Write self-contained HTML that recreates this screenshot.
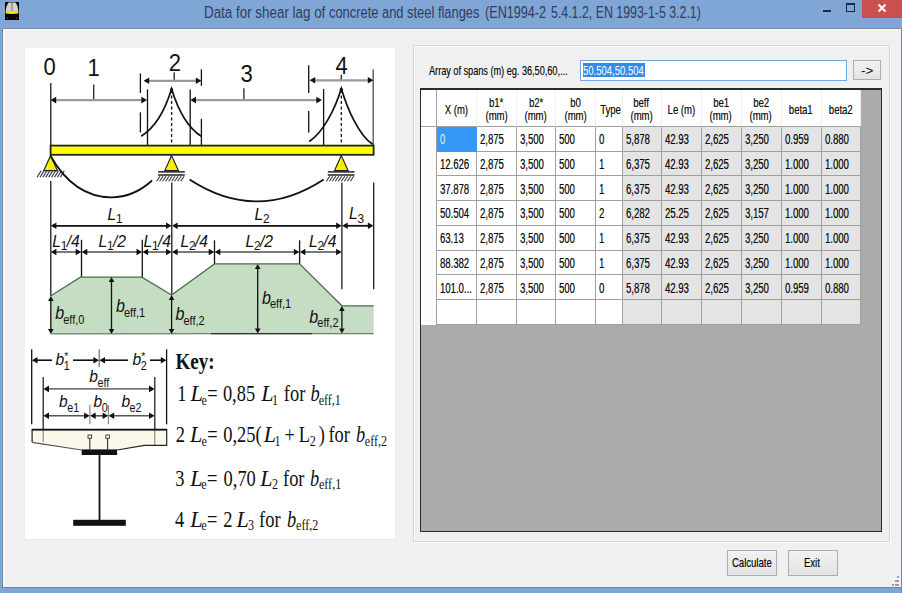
<!DOCTYPE html>
<html><head><meta charset="utf-8">
<style>
*{margin:0;padding:0;box-sizing:border-box}
html,body{width:902px;height:593px;overflow:hidden;background:#f0f0f0;font-family:"Liberation Sans",sans-serif}
.a{position:absolute}
.t{position:absolute;white-space:pre;transform-origin:0 0;line-height:1}
.cell{position:absolute;background:#fff;border-right:1px solid #a0a0a0;border-bottom:1px solid #a0a0a0;overflow:hidden}
.ro{background:#e4e4e4}
.sel{background:#3597f8;border-color:#3597f8}
.ct{position:absolute;left:3px;top:6.1px;font-size:13.8px;color:#0a0a0a;white-space:pre;transform:scaleX(.69);transform-origin:0 0;line-height:1;text-shadow:0.35px 0 0 rgba(0,0,0,.45)}
.sel .ct{color:#fff}
.rh{position:absolute;left:421px;width:16px;background:#fbfbfb;border-right:1px solid #a0a0a0}
.hd{position:absolute;background:#fff;border-right:1px solid #eeeeee;border-bottom:1px solid #a0a0a0}
.ht{position:absolute;left:0;width:100%;text-align:center;font-size:13.4px;color:#0a0a0a;white-space:pre;line-height:1;text-shadow:0.3px 0 0 rgba(0,0,0,.4)}
.ht span{display:inline-block;transform:scaleX(.71);transform-origin:50% 0}
.btn{position:absolute;border:1px solid #adadad;background:linear-gradient(#f2f2f2,#e3e3e3)}
</style></head><body>
<div class="a" style="left:0;top:0;width:902px;height:28px;background:#80a6d5"></div>
<div class="a" style="left:0;top:28px;width:902px;height:1px;background:#7189aa"></div>
<div class="a" style="left:0;top:28px;width:3px;height:565px;background:#80a6d5"></div>
<div class="a" style="left:2px;top:29px;width:1px;height:559px;background:#6f87a6"></div>
<div class="a" style="left:0;top:588px;width:902px;height:5px;background:#80a6d5"></div>
<div class="a" style="left:2px;top:587px;width:900px;height:1px;background:#6f87a6"></div>
<div class="a" style="left:901px;top:28px;width:1px;height:565px;background:#6f87a6"></div>
<div class="a" style="left:3px;top:29px;width:898px;height:1px;background:#fafbfd"></div>
<div class="a" style="left:897px;top:30px;width:4px;height:557px;background:#edf1f7"></div>
<div class="a" style="left:3px;top:30px;width:2px;height:557px;background:#f5f6f8"></div>

<svg class="a" style="left:5px;top:2.4px" width="14" height="18" viewBox="0 0 14 18">
<rect x="0" y="0" width="14" height="18" fill="#080808"/>
<path d="M3.6 0.6 L10.6 0.6 C12.2 3 13.2 6 13.3 9.8 L0.7 9.8 C0.8 6 1.8 3 3.6 0.6 Z" fill="#d6d2cc"/>
<path d="M7 0.8 L7 9.4" stroke="#5a5652" stroke-width="0.8"/>
<path d="M0.6 9.3 L13.4 9.3 L13.2 11.6 Q7 12.4 0.8 11.6 Z" fill="#eef000"/>
<path d="M2.2 15 L2.6 17 M11.8 15 L11.4 17" stroke="#444" stroke-width="0.9"/>
</svg>
<div class="t" style="left:204.1px;top:4px;font-size:17.4px;color:#2c3e5c;transform:scaleX(.770)">Data for shear lag of</div><div class="t" style="left:328.9px;top:4px;font-size:17.4px;color:#2c3e5c;transform:scaleX(.741)">concrete and steel flanges</div><div class="t" style="left:485.2px;top:4px;font-size:17.4px;color:#2c3e5c;transform:scaleX(.726)">(EN1994-2</div><div class="t" style="left:550.5px;top:4px;font-size:17.4px;color:#2c3e5c;transform:scaleX(.711)">5.4.1.2, EN 1993-1-5 3.2.1)</div>
<div class="a" style="left:823px;top:10px;width:8px;height:2px;background:#1b2a44"></div>
<div class="a" style="left:846px;top:3px;width:9px;height:9px;border:1px solid #1b2a44;border-top-width:2px"></div>
<div class="a" style="left:862px;top:0;width:40px;height:18px;background:#c9504c"></div>
<svg class="a" style="left:877px;top:3px" width="10" height="10" viewBox="0 0 10 10"><path d="M1.5 1.5 L8.5 8.5 M8.5 1.5 L1.5 8.5" stroke="#fff" stroke-width="2"/></svg>

<div class="a" style="left:24.5px;top:47.5px;width:370px;height:492.5px;background:#fff;border-bottom:1px solid #e8e8e8"></div>
<div class="a" style="left:413px;top:45px;width:477px;height:497px;border:1px solid #d6d6d6;box-shadow:inset 1px 1px 0 #fff,1px 1px 0 #fff"></div>

<div class="t" style="left:429px;top:64.3px;font-size:13.4px;color:#0a0a0a;transform:scaleX(.682);text-shadow:0.3px 0 0 rgba(0,0,0,.4)">Array of spans (m) eg. 36,50,60,...</div>
<div class="a" style="left:580px;top:59.5px;width:267px;height:21.5px;background:#fff;border:1px solid #6fa8e3"></div>
<div class="a" style="left:583px;top:63px;width:62px;height:13.5px;background:#338de8"></div>
<div class="t" style="left:583px;top:63.6px;font-size:13.6px;color:#fff;transform:scaleX(.70)">50.504,50.504</div>
<div class="btn" style="left:853px;top:60px;width:28px;height:20px"></div>
<div class="t" style="left:860.5px;top:65px;font-size:12.8px;color:#111;transform:scaleX(1.05)">-&gt;</div>

<div class="a" style="left:420px;top:88px;width:461.5px;height:443.8px;background:#ababab;border:1px solid #2a2a2a;border-top-width:2px;border-left-width:1.5px"></div>
<div class="hd" style="left:421px;top:90px;width:16px;height:37.00px;border-right-color:#a0a0a0"></div>
<div class="hd" style="left:437.00px;top:90px;width:40.00px;height:37.00px"><div class="ht" style="top:12.6px"><span>X (m)</span></div></div>
<div class="hd" style="left:477.00px;top:90px;width:39.50px;height:37.00px"><div class="ht" style="top:5.6px"><span>b1*</span></div><div class="ht" style="top:19.3px"><span>(mm)</span></div></div>
<div class="hd" style="left:516.50px;top:90px;width:39.50px;height:37.00px"><div class="ht" style="top:5.6px"><span>b2*</span></div><div class="ht" style="top:19.3px"><span>(mm)</span></div></div>
<div class="hd" style="left:556.00px;top:90px;width:40.00px;height:37.00px"><div class="ht" style="top:5.6px"><span>b0</span></div><div class="ht" style="top:19.3px"><span>(mm)</span></div></div>
<div class="hd" style="left:596.00px;top:90px;width:26.50px;height:37.00px"><div class="ht" style="top:12.6px"><span>Type</span></div></div>
<div class="hd" style="left:622.50px;top:90px;width:39.00px;height:37.00px"><div class="ht" style="top:5.6px"><span>beff</span></div><div class="ht" style="top:19.3px"><span>(mm)</span></div></div>
<div class="hd" style="left:661.50px;top:90px;width:40.00px;height:37.00px"><div class="ht" style="top:12.6px"><span>Le (m)</span></div></div>
<div class="hd" style="left:701.50px;top:90px;width:40.00px;height:37.00px"><div class="ht" style="top:5.6px"><span>be1</span></div><div class="ht" style="top:19.3px"><span>(mm)</span></div></div>
<div class="hd" style="left:741.50px;top:90px;width:40.00px;height:37.00px"><div class="ht" style="top:5.6px"><span>be2</span></div><div class="ht" style="top:19.3px"><span>(mm)</span></div></div>
<div class="hd" style="left:781.50px;top:90px;width:40.00px;height:37.00px"><div class="ht" style="top:12.6px"><span>beta1</span></div></div>
<div class="hd" style="left:821.50px;top:90px;width:39.50px;height:37.00px"><div class="ht" style="top:12.6px"><span>beta2</span></div></div>
<div class="rh" style="top:127.00px;height:24.74px"></div>
<div class="cell sel" style="left:437.00px;top:127.00px;width:40.00px;height:24.74px"><div class="ct">0</div></div>
<div class="cell" style="left:477.00px;top:127.00px;width:39.50px;height:24.74px"><div class="ct">2,875</div></div>
<div class="cell" style="left:516.50px;top:127.00px;width:39.50px;height:24.74px"><div class="ct">3,500</div></div>
<div class="cell" style="left:556.00px;top:127.00px;width:40.00px;height:24.74px"><div class="ct">500</div></div>
<div class="cell" style="left:596.00px;top:127.00px;width:26.50px;height:24.74px"><div class="ct">0</div></div>
<div class="cell ro" style="left:622.50px;top:127.00px;width:39.00px;height:24.74px"><div class="ct">5,878</div></div>
<div class="cell ro" style="left:661.50px;top:127.00px;width:40.00px;height:24.74px"><div class="ct">42.93</div></div>
<div class="cell ro" style="left:701.50px;top:127.00px;width:40.00px;height:24.74px"><div class="ct">2,625</div></div>
<div class="cell ro" style="left:741.50px;top:127.00px;width:40.00px;height:24.74px"><div class="ct">3,250</div></div>
<div class="cell ro" style="left:781.50px;top:127.00px;width:40.00px;height:24.74px"><div class="ct">0.959</div></div>
<div class="cell ro" style="left:821.50px;top:127.00px;width:39.50px;height:24.74px"><div class="ct">0.880</div></div>
<div class="rh" style="top:151.74px;height:24.74px"></div>
<div class="cell" style="left:437.00px;top:151.74px;width:40.00px;height:24.74px"><div class="ct">12.626</div></div>
<div class="cell" style="left:477.00px;top:151.74px;width:39.50px;height:24.74px"><div class="ct">2,875</div></div>
<div class="cell" style="left:516.50px;top:151.74px;width:39.50px;height:24.74px"><div class="ct">3,500</div></div>
<div class="cell" style="left:556.00px;top:151.74px;width:40.00px;height:24.74px"><div class="ct">500</div></div>
<div class="cell" style="left:596.00px;top:151.74px;width:26.50px;height:24.74px"><div class="ct">1</div></div>
<div class="cell ro" style="left:622.50px;top:151.74px;width:39.00px;height:24.74px"><div class="ct">6,375</div></div>
<div class="cell ro" style="left:661.50px;top:151.74px;width:40.00px;height:24.74px"><div class="ct">42.93</div></div>
<div class="cell ro" style="left:701.50px;top:151.74px;width:40.00px;height:24.74px"><div class="ct">2,625</div></div>
<div class="cell ro" style="left:741.50px;top:151.74px;width:40.00px;height:24.74px"><div class="ct">3,250</div></div>
<div class="cell ro" style="left:781.50px;top:151.74px;width:40.00px;height:24.74px"><div class="ct">1.000</div></div>
<div class="cell ro" style="left:821.50px;top:151.74px;width:39.50px;height:24.74px"><div class="ct">1.000</div></div>
<div class="rh" style="top:176.48px;height:24.74px"></div>
<div class="cell" style="left:437.00px;top:176.48px;width:40.00px;height:24.74px"><div class="ct">37.878</div></div>
<div class="cell" style="left:477.00px;top:176.48px;width:39.50px;height:24.74px"><div class="ct">2,875</div></div>
<div class="cell" style="left:516.50px;top:176.48px;width:39.50px;height:24.74px"><div class="ct">3,500</div></div>
<div class="cell" style="left:556.00px;top:176.48px;width:40.00px;height:24.74px"><div class="ct">500</div></div>
<div class="cell" style="left:596.00px;top:176.48px;width:26.50px;height:24.74px"><div class="ct">1</div></div>
<div class="cell ro" style="left:622.50px;top:176.48px;width:39.00px;height:24.74px"><div class="ct">6,375</div></div>
<div class="cell ro" style="left:661.50px;top:176.48px;width:40.00px;height:24.74px"><div class="ct">42.93</div></div>
<div class="cell ro" style="left:701.50px;top:176.48px;width:40.00px;height:24.74px"><div class="ct">2,625</div></div>
<div class="cell ro" style="left:741.50px;top:176.48px;width:40.00px;height:24.74px"><div class="ct">3,250</div></div>
<div class="cell ro" style="left:781.50px;top:176.48px;width:40.00px;height:24.74px"><div class="ct">1.000</div></div>
<div class="cell ro" style="left:821.50px;top:176.48px;width:39.50px;height:24.74px"><div class="ct">1.000</div></div>
<div class="rh" style="top:201.22px;height:24.74px"></div>
<div class="cell" style="left:437.00px;top:201.22px;width:40.00px;height:24.74px"><div class="ct">50.504</div></div>
<div class="cell" style="left:477.00px;top:201.22px;width:39.50px;height:24.74px"><div class="ct">2,875</div></div>
<div class="cell" style="left:516.50px;top:201.22px;width:39.50px;height:24.74px"><div class="ct">3,500</div></div>
<div class="cell" style="left:556.00px;top:201.22px;width:40.00px;height:24.74px"><div class="ct">500</div></div>
<div class="cell" style="left:596.00px;top:201.22px;width:26.50px;height:24.74px"><div class="ct">2</div></div>
<div class="cell ro" style="left:622.50px;top:201.22px;width:39.00px;height:24.74px"><div class="ct">6,282</div></div>
<div class="cell ro" style="left:661.50px;top:201.22px;width:40.00px;height:24.74px"><div class="ct">25.25</div></div>
<div class="cell ro" style="left:701.50px;top:201.22px;width:40.00px;height:24.74px"><div class="ct">2,625</div></div>
<div class="cell ro" style="left:741.50px;top:201.22px;width:40.00px;height:24.74px"><div class="ct">3,157</div></div>
<div class="cell ro" style="left:781.50px;top:201.22px;width:40.00px;height:24.74px"><div class="ct">1.000</div></div>
<div class="cell ro" style="left:821.50px;top:201.22px;width:39.50px;height:24.74px"><div class="ct">1.000</div></div>
<div class="rh" style="top:225.96px;height:24.74px"></div>
<div class="cell" style="left:437.00px;top:225.96px;width:40.00px;height:24.74px"><div class="ct">63.13</div></div>
<div class="cell" style="left:477.00px;top:225.96px;width:39.50px;height:24.74px"><div class="ct">2,875</div></div>
<div class="cell" style="left:516.50px;top:225.96px;width:39.50px;height:24.74px"><div class="ct">3,500</div></div>
<div class="cell" style="left:556.00px;top:225.96px;width:40.00px;height:24.74px"><div class="ct">500</div></div>
<div class="cell" style="left:596.00px;top:225.96px;width:26.50px;height:24.74px"><div class="ct">1</div></div>
<div class="cell ro" style="left:622.50px;top:225.96px;width:39.00px;height:24.74px"><div class="ct">6,375</div></div>
<div class="cell ro" style="left:661.50px;top:225.96px;width:40.00px;height:24.74px"><div class="ct">42.93</div></div>
<div class="cell ro" style="left:701.50px;top:225.96px;width:40.00px;height:24.74px"><div class="ct">2,625</div></div>
<div class="cell ro" style="left:741.50px;top:225.96px;width:40.00px;height:24.74px"><div class="ct">3,250</div></div>
<div class="cell ro" style="left:781.50px;top:225.96px;width:40.00px;height:24.74px"><div class="ct">1.000</div></div>
<div class="cell ro" style="left:821.50px;top:225.96px;width:39.50px;height:24.74px"><div class="ct">1.000</div></div>
<div class="rh" style="top:250.70px;height:24.74px"></div>
<div class="cell" style="left:437.00px;top:250.70px;width:40.00px;height:24.74px"><div class="ct">88.382</div></div>
<div class="cell" style="left:477.00px;top:250.70px;width:39.50px;height:24.74px"><div class="ct">2,875</div></div>
<div class="cell" style="left:516.50px;top:250.70px;width:39.50px;height:24.74px"><div class="ct">3,500</div></div>
<div class="cell" style="left:556.00px;top:250.70px;width:40.00px;height:24.74px"><div class="ct">500</div></div>
<div class="cell" style="left:596.00px;top:250.70px;width:26.50px;height:24.74px"><div class="ct">1</div></div>
<div class="cell ro" style="left:622.50px;top:250.70px;width:39.00px;height:24.74px"><div class="ct">6,375</div></div>
<div class="cell ro" style="left:661.50px;top:250.70px;width:40.00px;height:24.74px"><div class="ct">42.93</div></div>
<div class="cell ro" style="left:701.50px;top:250.70px;width:40.00px;height:24.74px"><div class="ct">2,625</div></div>
<div class="cell ro" style="left:741.50px;top:250.70px;width:40.00px;height:24.74px"><div class="ct">3,250</div></div>
<div class="cell ro" style="left:781.50px;top:250.70px;width:40.00px;height:24.74px"><div class="ct">1.000</div></div>
<div class="cell ro" style="left:821.50px;top:250.70px;width:39.50px;height:24.74px"><div class="ct">1.000</div></div>
<div class="rh" style="top:275.44px;height:24.74px"></div>
<div class="cell" style="left:437.00px;top:275.44px;width:40.00px;height:24.74px"><div class="ct">101.0...</div></div>
<div class="cell" style="left:477.00px;top:275.44px;width:39.50px;height:24.74px"><div class="ct">2,875</div></div>
<div class="cell" style="left:516.50px;top:275.44px;width:39.50px;height:24.74px"><div class="ct">3,500</div></div>
<div class="cell" style="left:556.00px;top:275.44px;width:40.00px;height:24.74px"><div class="ct">500</div></div>
<div class="cell" style="left:596.00px;top:275.44px;width:26.50px;height:24.74px"><div class="ct">0</div></div>
<div class="cell ro" style="left:622.50px;top:275.44px;width:39.00px;height:24.74px"><div class="ct">5,878</div></div>
<div class="cell ro" style="left:661.50px;top:275.44px;width:40.00px;height:24.74px"><div class="ct">42.93</div></div>
<div class="cell ro" style="left:701.50px;top:275.44px;width:40.00px;height:24.74px"><div class="ct">2,625</div></div>
<div class="cell ro" style="left:741.50px;top:275.44px;width:40.00px;height:24.74px"><div class="ct">3,250</div></div>
<div class="cell ro" style="left:781.50px;top:275.44px;width:40.00px;height:24.74px"><div class="ct">0.959</div></div>
<div class="cell ro" style="left:821.50px;top:275.44px;width:39.50px;height:24.74px"><div class="ct">0.880</div></div>
<div class="rh" style="top:300.18px;height:24.74px"></div>
<div class="cell" style="left:437.00px;top:300.18px;width:40.00px;height:24.74px"></div>
<div class="cell" style="left:477.00px;top:300.18px;width:39.50px;height:24.74px"></div>
<div class="cell" style="left:516.50px;top:300.18px;width:39.50px;height:24.74px"></div>
<div class="cell" style="left:556.00px;top:300.18px;width:40.00px;height:24.74px"></div>
<div class="cell" style="left:596.00px;top:300.18px;width:26.50px;height:24.74px"></div>
<div class="cell ro" style="left:622.50px;top:300.18px;width:39.00px;height:24.74px"></div>
<div class="cell ro" style="left:661.50px;top:300.18px;width:40.00px;height:24.74px"></div>
<div class="cell ro" style="left:701.50px;top:300.18px;width:40.00px;height:24.74px"></div>
<div class="cell ro" style="left:741.50px;top:300.18px;width:40.00px;height:24.74px"></div>
<div class="cell ro" style="left:781.50px;top:300.18px;width:40.00px;height:24.74px"></div>
<div class="cell ro" style="left:821.50px;top:300.18px;width:39.50px;height:24.74px"></div>

<div class="a" style="left:891.7px;top:583.6px;width:2px;height:2px;background:#9a9a9a"></div><div class="a" style="left:894.5px;top:583.6px;width:2px;height:2px;background:#9a9a9a"></div><div class="a" style="left:897.2px;top:583.6px;width:2px;height:2px;background:#9a9a9a"></div><div class="a" style="left:894.5px;top:579.9px;width:2px;height:2px;background:#9a9a9a"></div><div class="a" style="left:897.2px;top:579.9px;width:2px;height:2px;background:#9a9a9a"></div><div class="a" style="left:897.2px;top:576.3px;width:2px;height:2px;background:#9a9a9a"></div>
<div class="btn" style="left:727px;top:550px;width:50px;height:26px"></div>
<div class="t" style="left:731.5px;top:556.3px;font-size:13.6px;color:#0a0a0a;transform:scaleX(.70);text-shadow:0.3px 0 0 rgba(0,0,0,.4)">Calculate</div>
<div class="btn" style="left:788px;top:550px;width:50px;height:26px"></div>
<div class="t" style="left:804px;top:556.3px;font-size:13.6px;color:#0a0a0a;transform:scaleX(.70);text-shadow:0.3px 0 0 rgba(0,0,0,.4)">Exit</div>

<svg class="a" style="left:0;top:0" width="902" height="593" viewBox="0 0 902 593">
<text transform="translate(43.5 75.3) scale(0.9 1)" style="font-family:Liberation Sans;font-size:24.5px;" fill="#111">0</text>
<text transform="translate(87.6 75.6) scale(0.9 1)" style="font-family:Liberation Sans;font-size:24.5px;" fill="#111">1</text>
<text transform="translate(168.8 71.3) scale(0.9 1)" style="font-family:Liberation Sans;font-size:24.5px;" fill="#111">2</text>
<text transform="translate(240.5 82.3) scale(0.9 1)" style="font-family:Liberation Sans;font-size:24.5px;" fill="#111">3</text>
<text transform="translate(335.6 74.3) scale(0.9 1)" style="font-family:Liberation Sans;font-size:24.5px;" fill="#111">4</text>
<line x1="93.7" y1="84.4" x2="93.7" y2="100.5" stroke="#333" stroke-width="1.4" />
<line x1="174.2" y1="72.3" x2="174.2" y2="80.8" stroke="#333" stroke-width="1.4" />
<line x1="243.9" y1="88.3" x2="243.9" y2="100.5" stroke="#333" stroke-width="1.4" />
<line x1="341.3" y1="74.8" x2="341.3" y2="80.5" stroke="#333" stroke-width="1.4" />
<line x1="50.8" y1="83" x2="50.8" y2="146" stroke="#111" stroke-width="1.25" />
<line x1="50.8" y1="181" x2="50.8" y2="296" stroke="#111" stroke-width="1.25" />
<line x1="140.4" y1="73.5" x2="140.4" y2="93" stroke="#111" stroke-width="1.3" />
<line x1="140.4" y1="112.3" x2="140.4" y2="132.4" stroke="#111" stroke-width="1.3" />
<line x1="147.5" y1="89.4" x2="147.5" y2="145" stroke="#111" stroke-width="1.3" />
<line x1="190.2" y1="89.4" x2="190.2" y2="145" stroke="#111" stroke-width="1.3" />
<line x1="201.4" y1="69.3" x2="201.4" y2="85.8" stroke="#111" stroke-width="1.3" />
<line x1="201.4" y1="118.8" x2="201.4" y2="145" stroke="#111" stroke-width="1.3" />
<line x1="308.7" y1="65.2" x2="308.7" y2="93" stroke="#111" stroke-width="1.3" />
<line x1="308.7" y1="110.9" x2="308.7" y2="132.6" stroke="#111" stroke-width="1.3" />
<line x1="323.6" y1="88.9" x2="323.6" y2="145" stroke="#111" stroke-width="1.3" />
<line x1="373.2" y1="69.2" x2="373.2" y2="145" stroke="#666" stroke-width="1.5" />
<line x1="171.6" y1="90" x2="171.6" y2="145" stroke="#111" stroke-width="1.3" stroke-dasharray="3 2.5"/>
<line x1="341.3" y1="90" x2="341.3" y2="145" stroke="#111" stroke-width="1.3" stroke-dasharray="3 2.5"/>
<line x1="53.96" y1="100.1" x2="143.64" y2="100.1" stroke="#9a9a9a" stroke-width="2.2" />
<path d="M50.6 100.1 L56.2 96.8 L56.2 103.39999999999999 Z" fill="#111"/>
<path d="M147 100.1 L141.4 96.8 L141.4 103.39999999999999 Z" fill="#111"/>
<line x1="193.76000000000002" y1="100.1" x2="318.53999999999996" y2="100.1" stroke="#9a9a9a" stroke-width="2.2" />
<path d="M190.4 100.1 L196.0 96.8 L196.0 103.39999999999999 Z" fill="#111"/>
<path d="M321.9 100.1 L316.29999999999995 96.8 L316.29999999999995 103.39999999999999 Z" fill="#111"/>
<line x1="146.96" y1="80.8" x2="198.04" y2="80.8" stroke="#9a9a9a" stroke-width="2.2" />
<path d="M143.6 80.8 L149.2 77.5 L149.2 84.1 Z" fill="#111"/>
<path d="M201.4 80.8 L195.8 77.5 L195.8 84.1 Z" fill="#111"/>
<line x1="312.96000000000004" y1="80.3" x2="370.03999999999996" y2="80.3" stroke="#9a9a9a" stroke-width="2.2" />
<path d="M309.6 80.3 L315.20000000000005 77.0 L315.20000000000005 83.6 Z" fill="#111"/>
<path d="M373.4 80.3 L367.79999999999995 77.0 L367.79999999999995 83.6 Z" fill="#111"/>
<path d="M141.2 136.3 C155.2 127.30000000000001 165.6 108.7 171.6 88.7 C177.6 108.7 187.3 127.30000000000001 201.3 136.3" fill="none" stroke="#111" stroke-width="1.7"/>
<circle cx="171.6" cy="89.7" r="1.6" fill="#111"/>
<path d="M309.2 141.5 C323.2 132.5 335.3 108.4 341.3 88.4 C347.3 108.4 358.6 135.3 372.6 144.3" fill="none" stroke="#111" stroke-width="1.7"/>
<circle cx="341.3" cy="89.4" r="1.6" fill="#111"/>
<rect x="50.6" y="145.6" width="323" height="9.2" fill="#ffff00" stroke="#222" stroke-width="1.8"/>
<path d="M50.6 155.6 L43.800000000000004 170.6 L57.4 170.6 Z" fill="#f6ef00" stroke="#222" stroke-width="1.2"/>
<line x1="37.1" y1="177.2" x2="41.1" y2="170.8" stroke="#334" stroke-width="1.2" />
<line x1="40.0" y1="177.2" x2="44.0" y2="170.8" stroke="#334" stroke-width="1.2" />
<line x1="42.9" y1="177.2" x2="46.9" y2="170.8" stroke="#334" stroke-width="1.2" />
<line x1="45.8" y1="177.2" x2="49.8" y2="170.8" stroke="#334" stroke-width="1.2" />
<line x1="48.7" y1="177.2" x2="52.7" y2="170.8" stroke="#334" stroke-width="1.2" />
<line x1="51.6" y1="177.2" x2="55.6" y2="170.8" stroke="#334" stroke-width="1.2" />
<line x1="54.5" y1="177.2" x2="58.5" y2="170.8" stroke="#334" stroke-width="1.2" />
<line x1="57.400000000000006" y1="177.2" x2="61.400000000000006" y2="170.8" stroke="#334" stroke-width="1.2" />
<line x1="60.3" y1="177.2" x2="64.3" y2="170.8" stroke="#334" stroke-width="1.2" />
<path d="M171.6 155.6 L164.79999999999998 170.6 L178.4 170.6 Z" fill="#f6ef00" stroke="#222" stroke-width="1.2"/>
<line x1="158.1" y1="171.9" x2="184.79999999999998" y2="171.9" stroke="#111" stroke-width="1.4" />
<line x1="158.1" y1="175.0" x2="184.79999999999998" y2="175.0" stroke="#111" stroke-width="1.4" />
<line x1="156.6" y1="181.2" x2="160.1" y2="176.2" stroke="#333" stroke-width="1.1" />
<line x1="159.6" y1="181.2" x2="163.1" y2="176.2" stroke="#333" stroke-width="1.1" />
<line x1="162.6" y1="181.2" x2="166.1" y2="176.2" stroke="#333" stroke-width="1.1" />
<line x1="165.6" y1="181.2" x2="169.1" y2="176.2" stroke="#333" stroke-width="1.1" />
<line x1="168.6" y1="181.2" x2="172.1" y2="176.2" stroke="#333" stroke-width="1.1" />
<line x1="171.6" y1="181.2" x2="175.1" y2="176.2" stroke="#333" stroke-width="1.1" />
<line x1="174.6" y1="181.2" x2="178.1" y2="176.2" stroke="#333" stroke-width="1.1" />
<line x1="177.6" y1="181.2" x2="181.1" y2="176.2" stroke="#333" stroke-width="1.1" />
<line x1="180.6" y1="181.2" x2="184.1" y2="176.2" stroke="#333" stroke-width="1.1" />
<path d="M341.3 155.6 L334.5 170.6 L348.1 170.6 Z" fill="#f6ef00" stroke="#222" stroke-width="1.2"/>
<line x1="327.8" y1="171.9" x2="354.5" y2="171.9" stroke="#111" stroke-width="1.4" />
<line x1="327.8" y1="175.0" x2="354.5" y2="175.0" stroke="#111" stroke-width="1.4" />
<line x1="326.3" y1="181.2" x2="329.8" y2="176.2" stroke="#333" stroke-width="1.1" />
<line x1="329.3" y1="181.2" x2="332.8" y2="176.2" stroke="#333" stroke-width="1.1" />
<line x1="332.3" y1="181.2" x2="335.8" y2="176.2" stroke="#333" stroke-width="1.1" />
<line x1="335.3" y1="181.2" x2="338.8" y2="176.2" stroke="#333" stroke-width="1.1" />
<line x1="338.3" y1="181.2" x2="341.8" y2="176.2" stroke="#333" stroke-width="1.1" />
<line x1="341.3" y1="181.2" x2="344.8" y2="176.2" stroke="#333" stroke-width="1.1" />
<line x1="344.3" y1="181.2" x2="347.8" y2="176.2" stroke="#333" stroke-width="1.1" />
<line x1="347.3" y1="181.2" x2="350.8" y2="176.2" stroke="#333" stroke-width="1.1" />
<line x1="350.3" y1="181.2" x2="353.8" y2="176.2" stroke="#333" stroke-width="1.1" />
<path d="M50.6 156 C62 176 80 197 111 197.3 C132 197.5 146 186 152.1 180.5" fill="none" stroke="#111" stroke-width="1.8"/>
<path d="M189.6 179.6 Q256.5 223.4 323.7 179.4" fill="none" stroke="#111" stroke-width="1.8"/>
<line x1="171.8" y1="182.5" x2="171.8" y2="295" stroke="#111" stroke-width="1.25" />
<line x1="341.9" y1="182.5" x2="341.9" y2="289.3" stroke="#111" stroke-width="1.25" />
<line x1="373.7" y1="182.5" x2="373.7" y2="289.3" stroke="#111" stroke-width="1.25" />
<line x1="81.5" y1="239.8" x2="81.5" y2="277" stroke="#111" stroke-width="1.3" />
<line x1="142.3" y1="239.8" x2="142.3" y2="277" stroke="#111" stroke-width="1.3" />
<line x1="214.5" y1="240.3" x2="214.5" y2="264" stroke="#111" stroke-width="1.3" />
<line x1="299.6" y1="240.3" x2="299.6" y2="264" stroke="#111" stroke-width="1.3" />
<line x1="54.16" y1="225.8" x2="168.23999999999998" y2="225.8" stroke="#111" stroke-width="1.8" />
<path d="M50.8 225.8 L56.4 222.5 L56.4 229.10000000000002 Z" fill="#111"/>
<path d="M171.6 225.8 L166.0 222.5 L166.0 229.10000000000002 Z" fill="#111"/>
<line x1="175.36" y1="225.8" x2="338.34" y2="225.8" stroke="#111" stroke-width="1.8" />
<path d="M172.0 225.8 L177.6 222.5 L177.6 229.10000000000002 Z" fill="#111"/>
<path d="M341.7 225.8 L336.09999999999997 222.5 L336.09999999999997 229.10000000000002 Z" fill="#111"/>
<line x1="345.46000000000004" y1="225.8" x2="370.14" y2="225.8" stroke="#111" stroke-width="1.8" />
<path d="M342.1 225.8 L347.70000000000005 222.5 L347.70000000000005 229.10000000000002 Z" fill="#111"/>
<path d="M373.5 225.8 L367.9 222.5 L367.9 229.10000000000002 Z" fill="#111"/>
<line x1="54.16" y1="252" x2="77.94" y2="252" stroke="#7a7a7a" stroke-width="2" />
<path d="M50.8 252 L56.4 248.7 L56.4 255.3 Z" fill="#111"/>
<path d="M81.3 252 L75.7 248.7 L75.7 255.3 Z" fill="#111"/>
<line x1="85.06" y1="252" x2="138.73999999999998" y2="252" stroke="#7a7a7a" stroke-width="2" />
<path d="M81.7 252 L87.3 248.7 L87.3 255.3 Z" fill="#111"/>
<path d="M142.1 252 L136.5 248.7 L136.5 255.3 Z" fill="#111"/>
<line x1="145.86" y1="252" x2="168.23999999999998" y2="252" stroke="#7a7a7a" stroke-width="2" />
<path d="M142.5 252 L148.1 248.7 L148.1 255.3 Z" fill="#111"/>
<path d="M171.6 252 L166.0 248.7 L166.0 255.3 Z" fill="#111"/>
<line x1="175.36" y1="252" x2="210.94" y2="252" stroke="#7a7a7a" stroke-width="2" />
<path d="M172.0 252 L177.6 248.7 L177.6 255.3 Z" fill="#111"/>
<path d="M214.3 252 L208.70000000000002 248.7 L208.70000000000002 255.3 Z" fill="#111"/>
<line x1="218.06" y1="252" x2="296.03999999999996" y2="252" stroke="#7a7a7a" stroke-width="2" />
<path d="M214.7 252 L220.29999999999998 248.7 L220.29999999999998 255.3 Z" fill="#111"/>
<path d="M299.4 252 L293.79999999999995 248.7 L293.79999999999995 255.3 Z" fill="#111"/>
<line x1="303.16" y1="252" x2="338.34" y2="252" stroke="#7a7a7a" stroke-width="2" />
<path d="M299.8 252 L305.40000000000003 248.7 L305.40000000000003 255.3 Z" fill="#111"/>
<path d="M341.7 252 L336.09999999999997 248.7 L336.09999999999997 255.3 Z" fill="#111"/>
<text transform="translate(107.5 219.6) scale(0.95 1)" style="font-family:Liberation Sans;font-size:16.5px;font-style:italic;" fill="#111">L</text>
<text transform="translate(116.0 223.4) scale(0.95 1)" style="font-family:Liberation Sans;font-size:12.5px;" fill="#111">1</text>
<text transform="translate(254.5 219.6) scale(0.95 1)" style="font-family:Liberation Sans;font-size:16.5px;font-style:italic;" fill="#111">L</text>
<text transform="translate(263.0 223.4) scale(0.95 1)" style="font-family:Liberation Sans;font-size:12.5px;" fill="#111">2</text>
<text transform="translate(349 219.2) scale(0.95 1)" style="font-family:Liberation Sans;font-size:16.5px;font-style:italic;" fill="#111">L</text>
<text transform="translate(357.5 223.0) scale(0.95 1)" style="font-family:Liberation Sans;font-size:12.5px;" fill="#111">3</text>
<text transform="translate(52.2 246.6) scale(0.95 1)" style="font-family:Liberation Sans;font-size:16.5px;font-style:italic;" fill="#111">L</text>
<text transform="translate(60.7 250.4) scale(0.95 1)" style="font-family:Liberation Sans;font-size:12.5px;" fill="#111">1</text>
<text transform="translate(66.7 246.6) scale(0.95 1)" style="font-family:Liberation Sans;font-size:16.5px;font-style:italic;" fill="#111">/4</text>
<text transform="translate(98.5 246.6) scale(0.95 1)" style="font-family:Liberation Sans;font-size:16.5px;font-style:italic;" fill="#111">L</text>
<text transform="translate(107.0 250.4) scale(0.95 1)" style="font-family:Liberation Sans;font-size:12.5px;" fill="#111">1</text>
<text transform="translate(113.0 246.6) scale(0.95 1)" style="font-family:Liberation Sans;font-size:16.5px;font-style:italic;" fill="#111">/2</text>
<text transform="translate(143.5 246.6) scale(0.95 1)" style="font-family:Liberation Sans;font-size:16.5px;font-style:italic;" fill="#111">L</text>
<text transform="translate(152.0 250.4) scale(0.95 1)" style="font-family:Liberation Sans;font-size:12.5px;" fill="#111">1</text>
<text transform="translate(158.0 246.6) scale(0.95 1)" style="font-family:Liberation Sans;font-size:16.5px;font-style:italic;" fill="#111">/4</text>
<text transform="translate(180.5 246.6) scale(0.95 1)" style="font-family:Liberation Sans;font-size:16.5px;font-style:italic;" fill="#111">L</text>
<text transform="translate(189.0 250.4) scale(0.95 1)" style="font-family:Liberation Sans;font-size:12.5px;" fill="#111">2</text>
<text transform="translate(195.0 246.6) scale(0.95 1)" style="font-family:Liberation Sans;font-size:16.5px;font-style:italic;" fill="#111">/4</text>
<text transform="translate(245.5 246.6) scale(0.95 1)" style="font-family:Liberation Sans;font-size:16.5px;font-style:italic;" fill="#111">L</text>
<text transform="translate(254.0 250.4) scale(0.95 1)" style="font-family:Liberation Sans;font-size:12.5px;" fill="#111">2</text>
<text transform="translate(260.0 246.6) scale(0.95 1)" style="font-family:Liberation Sans;font-size:16.5px;font-style:italic;" fill="#111">/2</text>
<text transform="translate(309 246.6) scale(0.95 1)" style="font-family:Liberation Sans;font-size:16.5px;font-style:italic;" fill="#111">L</text>
<text transform="translate(317.5 250.4) scale(0.95 1)" style="font-family:Liberation Sans;font-size:12.5px;" fill="#111">2</text>
<text transform="translate(323.5 246.6) scale(0.95 1)" style="font-family:Liberation Sans;font-size:16.5px;font-style:italic;" fill="#111">/4</text>
<path d="M50.6 296 L80.4 277.1 L141.9 277.1 L171.6 295 L214.5 263.9 L299.6 263.9 L341.9 305.8 L373.7 305.8 L373.7 333.6 L50.6 334 Z" fill="#c4ddc3" stroke="none"/>
<path d="M50.6 296 L80.4 277.1 L141.9 277.1 L171.6 295 L214.5 263.9 L299.6 263.9 L341.9 305.8 L373.7 305.8" fill="none" stroke="#4d6b4d" stroke-width="1.3"/>
<line x1="50.6" y1="333.8" x2="373.7" y2="333.6" stroke="#6f7f6f" stroke-width="1.3" />
<line x1="211" y1="333.7" x2="312" y2="333.7" stroke="#333" stroke-width="1.3" />
<line x1="50.8" y1="299.0" x2="50.8" y2="331.0" stroke="#111" stroke-width="1.3" />
<path d="M50.8 296 L48.0 301 L53.599999999999994 301 Z" fill="#111"/>
<path d="M50.8 334 L48.0 329 L53.599999999999994 329 Z" fill="#111"/>
<line x1="111.5" y1="280.0" x2="111.5" y2="331.0" stroke="#111" stroke-width="1.3" />
<path d="M111.5 277 L108.7 282 L114.3 282 Z" fill="#111"/>
<path d="M111.5 334 L108.7 329 L114.3 329 Z" fill="#111"/>
<line x1="171.6" y1="298.0" x2="171.6" y2="331.0" stroke="#111" stroke-width="1.3" />
<path d="M171.6 295 L168.79999999999998 300 L174.4 300 Z" fill="#111"/>
<path d="M171.6 334 L168.79999999999998 329 L174.4 329 Z" fill="#111"/>
<line x1="257.7" y1="267.0" x2="257.7" y2="330.5" stroke="#111" stroke-width="1.3" />
<path d="M257.7 264 L254.89999999999998 269 L260.5 269 Z" fill="#111"/>
<path d="M257.7 333.5 L254.89999999999998 328.5 L260.5 328.5 Z" fill="#111"/>
<line x1="341.9" y1="309.0" x2="341.9" y2="330.5" stroke="#111" stroke-width="1.3" />
<path d="M341.9 306 L339.09999999999997 311 L344.7 311 Z" fill="#111"/>
<path d="M341.9 333.5 L339.09999999999997 328.5 L344.7 328.5 Z" fill="#111"/>
<text transform="translate(55.2 319.3) scale(0.92 1)" style="font-family:Liberation Sans;font-size:17.5px;font-style:italic;" fill="#111">b</text>
<text transform="translate(63.2 323.6) scale(0.86 1)" style="font-family:Liberation Sans;font-size:12.8px;" fill="#111">eff,0</text>
<text transform="translate(116 312.2) scale(0.92 1)" style="font-family:Liberation Sans;font-size:17.5px;font-style:italic;" fill="#111">b</text>
<text transform="translate(124 316.5) scale(0.86 1)" style="font-family:Liberation Sans;font-size:12.8px;" fill="#111">eff,1</text>
<text transform="translate(175.5 320.3) scale(0.92 1)" style="font-family:Liberation Sans;font-size:17.5px;font-style:italic;" fill="#111">b</text>
<text transform="translate(183.5 324.6) scale(0.86 1)" style="font-family:Liberation Sans;font-size:12.8px;" fill="#111">eff,2</text>
<text transform="translate(262 303.8) scale(0.92 1)" style="font-family:Liberation Sans;font-size:17.5px;font-style:italic;" fill="#111">b</text>
<text transform="translate(270 308.1) scale(0.86 1)" style="font-family:Liberation Sans;font-size:12.8px;" fill="#111">eff,1</text>
<text transform="translate(309.3 322.5) scale(0.92 1)" style="font-family:Liberation Sans;font-size:17.5px;font-style:italic;" fill="#111">b</text>
<text transform="translate(317.3 326.8) scale(0.86 1)" style="font-family:Liberation Sans;font-size:12.8px;" fill="#111">eff,2</text>
<line x1="31.7" y1="349.3" x2="31.7" y2="424.3" stroke="#111" stroke-width="1.3" />
<line x1="166.6" y1="349.3" x2="166.6" y2="424.3" stroke="#111" stroke-width="1.3" />
<line x1="99.2" y1="349.3" x2="99.2" y2="367" stroke="#777" stroke-width="1.3" />
<line x1="35" y1="360.2" x2="52" y2="360.2" stroke="#111" stroke-width="1.6" />
<path d="M31.9 360.2 L37.5 356.9 L37.5 363.5 Z" fill="#111"/>
<line x1="73" y1="360.2" x2="96" y2="360.2" stroke="#111" stroke-width="1.6" />
<path d="M99 360.2 L93.4 356.9 L93.4 363.5 Z" fill="#111"/>
<path d="M99.4 360.2 L105.0 356.9 L105.0 363.5 Z" fill="#111"/>
<line x1="103" y1="360.2" x2="128" y2="360.2" stroke="#111" stroke-width="1.6" />
<line x1="150" y1="360.2" x2="163" y2="360.2" stroke="#111" stroke-width="1.6" />
<path d="M166.4 360.2 L160.8 356.9 L160.8 363.5 Z" fill="#111"/>
<line x1="43.2" y1="377" x2="43.2" y2="445" stroke="#111" stroke-width="1.2" />
<line x1="154.8" y1="377" x2="154.8" y2="445" stroke="#111" stroke-width="1.2" />
<line x1="46.76" y1="388.9" x2="151.23999999999998" y2="388.9" stroke="#777" stroke-width="1.6" />
<path d="M43.4 388.9 L49.0 385.59999999999997 L49.0 392.2 Z" fill="#111"/>
<path d="M154.6 388.9 L149.0 385.59999999999997 L149.0 392.2 Z" fill="#111"/>
<line x1="89.9" y1="404.9" x2="89.9" y2="424.3" stroke="#888" stroke-width="1.2" />
<line x1="108.4" y1="404.9" x2="108.4" y2="424.3" stroke="#888" stroke-width="1.2" />
<line x1="46.76" y1="415.8" x2="86.34" y2="415.8" stroke="#555" stroke-width="1.6" />
<path d="M43.4 415.8 L49.0 412.5 L49.0 419.1 Z" fill="#111"/>
<path d="M89.7 415.8 L84.10000000000001 412.5 L84.10000000000001 419.1 Z" fill="#111"/>
<line x1="93.46" y1="415.8" x2="104.84" y2="415.8" stroke="#555" stroke-width="1.6" />
<path d="M90.1 415.8 L95.69999999999999 412.5 L95.69999999999999 419.1 Z" fill="#111"/>
<path d="M108.2 415.8 L102.60000000000001 412.5 L102.60000000000001 419.1 Z" fill="#111"/>
<line x1="111.96" y1="415.8" x2="151.23999999999998" y2="415.8" stroke="#555" stroke-width="1.6" />
<path d="M108.6 415.8 L114.19999999999999 412.5 L114.19999999999999 419.1 Z" fill="#111"/>
<path d="M154.6 415.8 L149.0 412.5 L149.0 419.1 Z" fill="#111"/>
<text transform="translate(55.6 365.2) scale(0.92 1)" style="font-family:Liberation Sans;font-size:17px;font-style:italic;" fill="#111">b</text>
<text transform="translate(63.8 369.8) scale(0.86 1)" style="font-family:Liberation Sans;font-size:12.5px;" fill="#111">1</text>
<text transform="translate(64.2 360.0) scale(0.9 1)" style="font-family:Liberation Sans;font-size:11.5px;" fill="#111">*</text>
<text transform="translate(132.6 365.2) scale(0.92 1)" style="font-family:Liberation Sans;font-size:17px;font-style:italic;" fill="#111">b</text>
<text transform="translate(140.79999999999998 369.8) scale(0.86 1)" style="font-family:Liberation Sans;font-size:12.5px;" fill="#111">2</text>
<text transform="translate(141.2 360.0) scale(0.9 1)" style="font-family:Liberation Sans;font-size:11.5px;" fill="#111">*</text>
<text transform="translate(89.3 382.3) scale(0.92 1)" style="font-family:Liberation Sans;font-size:17px;font-style:italic;" fill="#111">b</text>
<text transform="translate(97.5 386.90000000000003) scale(0.86 1)" style="font-family:Liberation Sans;font-size:12.5px;" fill="#111">eff</text>
<text transform="translate(59 407) scale(0.92 1)" style="font-family:Liberation Sans;font-size:17px;font-style:italic;" fill="#111">b</text>
<text transform="translate(67.2 411.6) scale(0.86 1)" style="font-family:Liberation Sans;font-size:12.5px;" fill="#111">e1</text>
<text transform="translate(93.6 407) scale(0.92 1)" style="font-family:Liberation Sans;font-size:17px;font-style:italic;" fill="#111">b</text>
<text transform="translate(101.8 411.6) scale(0.86 1)" style="font-family:Liberation Sans;font-size:12.5px;" fill="#111">0</text>
<text transform="translate(121.4 407) scale(0.92 1)" style="font-family:Liberation Sans;font-size:17px;font-style:italic;" fill="#111">b</text>
<text transform="translate(129.6 411.6) scale(0.86 1)" style="font-family:Liberation Sans;font-size:12.5px;" fill="#111">e2</text>
<path d="M32.1 429.6 L166.7 429.6 L166.7 445.3 L144.4 445.3 L117.1 450 L81.7 450 L32.1 442.3 Z" fill="#fcf8e9" stroke="none"/>
<path d="M32.1 442.3 L32.1 429.6 L166.7 429.6 L166.7 445.3 L144.4 445.3 L117.1 450" fill="none" stroke="#222" stroke-width="1.2"/>
<path d="M32.1 442.3 L81.7 450" fill="none" stroke="#555" stroke-width="1.2"/>
<line x1="43.2" y1="430" x2="43.2" y2="442" stroke="#777" stroke-width="1" />
<line x1="154.8" y1="430" x2="154.8" y2="445" stroke="#777" stroke-width="1" />
<line x1="31.9" y1="429.6" x2="166.9" y2="429.6" stroke="#111" stroke-width="1.8" />
<line x1="89.8" y1="438" x2="89.8" y2="449.5" stroke="#333" stroke-width="1.1" />
<rect x="88.0" y="435" width="3.6" height="3.3" fill="#fff" stroke="#333" stroke-width="0.9"/>
<line x1="107.6" y1="438" x2="107.6" y2="449.5" stroke="#333" stroke-width="1.1" />
<rect x="105.8" y="435" width="3.6" height="3.3" fill="#fff" stroke="#333" stroke-width="0.9"/>
<rect x="81.7" y="449.4" width="35.4" height="5.6" fill="#111"/>
<line x1="99.5" y1="455" x2="99.5" y2="520" stroke="#111" stroke-width="1.8" />
<rect x="73.2" y="519.8" width="52.6" height="6" fill="#111"/>
<text transform="translate(175.5 369) scale(0.86 1)" style="font-family:Liberation Serif;font-size:22.2px;font-weight:bold;" fill="#111">Key:</text>
<text transform="translate(177.3 401.2) scale(0.83 1)" style="font-family:Liberation Serif;font-size:22.2px;" fill="#111">1</text>
<text transform="translate(190.60000000000002 401.2) scale(1.0 1)" style="font-family:Liberation Serif;font-size:22.2px;font-style:italic;" fill="#111">L</text>
<text transform="translate(201.60000000000002 404.8) scale(0.83 1)" style="font-family:Liberation Serif;font-size:14.5px;" fill="#111">e</text>
<text transform="translate(207.20000000000002 401.2) scale(0.83 1)" style="font-family:Liberation Serif;font-size:22.2px;" fill="#111">=</text>
<text transform="translate(222.9 401.2) scale(0.83 1)" style="font-family:Liberation Serif;font-size:22.2px;" fill="#111">0,85</text>
<text transform="translate(261.3 401.2) scale(1.0 1)" style="font-family:Liberation Serif;font-size:22.2px;font-style:italic;" fill="#111">L</text>
<text transform="translate(271.90000000000003 404.8) scale(0.83 1)" style="font-family:Liberation Serif;font-size:14.5px;" fill="#111">1</text>
<text transform="translate(283.8 401.2) scale(0.83 1)" style="font-family:Liberation Serif;font-size:22.2px;" fill="#111">for</text>
<text transform="translate(310.6 401.2) scale(0.83 1)" style="font-family:Liberation Serif;font-size:22.2px;font-style:italic;" fill="#111">b</text>
<text transform="translate(318.7 404.8) scale(0.83 1)" style="font-family:Liberation Serif;font-size:14.5px;" fill="#111">eff,1</text>
<text transform="translate(175.70000000000002 442.3) scale(0.83 1)" style="font-family:Liberation Serif;font-size:22.2px;" fill="#111">2</text>
<text transform="translate(190.10000000000002 442.3) scale(1.0 1)" style="font-family:Liberation Serif;font-size:22.2px;font-style:italic;" fill="#111">L</text>
<text transform="translate(201.60000000000002 445.90000000000003) scale(0.83 1)" style="font-family:Liberation Serif;font-size:14.5px;" fill="#111">e</text>
<text transform="translate(207.20000000000002 442.3) scale(0.83 1)" style="font-family:Liberation Serif;font-size:22.2px;" fill="#111">=</text>
<text transform="translate(223.20000000000002 442.3) scale(0.83 1)" style="font-family:Liberation Serif;font-size:22.2px;" fill="#111">0,25(</text>
<text transform="translate(263.8 442.3) scale(1.0 1)" style="font-family:Liberation Serif;font-size:22.2px;font-style:italic;" fill="#111">L</text>
<text transform="translate(274.6 445.90000000000003) scale(0.83 1)" style="font-family:Liberation Serif;font-size:14.5px;" fill="#111">1</text>
<text transform="translate(284.6 442.3) scale(0.83 1)" style="font-family:Liberation Serif;font-size:22.2px;" fill="#111">+</text>
<text transform="translate(298.7 442.3) scale(0.83 1)" style="font-family:Liberation Serif;font-size:22.2px;" fill="#111">L</text>
<text transform="translate(309.8 445.90000000000003) scale(0.83 1)" style="font-family:Liberation Serif;font-size:14.5px;" fill="#111">2</text>
<text transform="translate(318.7 442.3) scale(0.83 1)" style="font-family:Liberation Serif;font-size:22.2px;" fill="#111">)</text>
<text transform="translate(328.40000000000003 442.3) scale(0.83 1)" style="font-family:Liberation Serif;font-size:22.2px;" fill="#111">for</text>
<text transform="translate(355.90000000000003 442.3) scale(0.83 1)" style="font-family:Liberation Serif;font-size:22.2px;font-style:italic;" fill="#111">b</text>
<text transform="translate(364.8 445.90000000000003) scale(0.83 1)" style="font-family:Liberation Serif;font-size:14.5px;" fill="#111">eff,2</text>
<text transform="translate(175.3 485.6) scale(0.83 1)" style="font-family:Liberation Serif;font-size:22.2px;" fill="#111">3</text>
<text transform="translate(190.20000000000002 485.6) scale(1.0 1)" style="font-family:Liberation Serif;font-size:22.2px;font-style:italic;" fill="#111">L</text>
<text transform="translate(201.20000000000002 489.20000000000005) scale(0.83 1)" style="font-family:Liberation Serif;font-size:14.5px;" fill="#111">e</text>
<text transform="translate(207.10000000000002 485.6) scale(0.83 1)" style="font-family:Liberation Serif;font-size:22.2px;" fill="#111">=</text>
<text transform="translate(223.60000000000002 485.6) scale(0.83 1)" style="font-family:Liberation Serif;font-size:22.2px;" fill="#111">0,70</text>
<text transform="translate(260.3 485.6) scale(1.0 1)" style="font-family:Liberation Serif;font-size:22.2px;font-style:italic;" fill="#111">L</text>
<text transform="translate(272.1 489.20000000000005) scale(0.83 1)" style="font-family:Liberation Serif;font-size:14.5px;" fill="#111">2</text>
<text transform="translate(283.0 485.6) scale(0.83 1)" style="font-family:Liberation Serif;font-size:22.2px;" fill="#111">for</text>
<text transform="translate(310.0 485.6) scale(0.83 1)" style="font-family:Liberation Serif;font-size:22.2px;font-style:italic;" fill="#111">b</text>
<text transform="translate(319.0 489.20000000000005) scale(0.83 1)" style="font-family:Liberation Serif;font-size:14.5px;" fill="#111">eff,1</text>
<text transform="translate(175.0 526.8) scale(0.83 1)" style="font-family:Liberation Serif;font-size:22.2px;" fill="#111">4</text>
<text transform="translate(190.20000000000002 526.8) scale(1.0 1)" style="font-family:Liberation Serif;font-size:22.2px;font-style:italic;" fill="#111">L</text>
<text transform="translate(201.20000000000002 530.4) scale(0.83 1)" style="font-family:Liberation Serif;font-size:14.5px;" fill="#111">e</text>
<text transform="translate(207.10000000000002 526.8) scale(0.83 1)" style="font-family:Liberation Serif;font-size:22.2px;" fill="#111">=</text>
<text transform="translate(223.20000000000002 526.8) scale(0.83 1)" style="font-family:Liberation Serif;font-size:22.2px;" fill="#111">2</text>
<text transform="translate(236.4 526.8) scale(1.0 1)" style="font-family:Liberation Serif;font-size:22.2px;font-style:italic;" fill="#111">L</text>
<text transform="translate(248.10000000000002 530.4) scale(0.83 1)" style="font-family:Liberation Serif;font-size:14.5px;" fill="#111">3</text>
<text transform="translate(259.1 526.8) scale(0.83 1)" style="font-family:Liberation Serif;font-size:22.2px;" fill="#111">for</text>
<text transform="translate(287.0 526.8) scale(0.83 1)" style="font-family:Liberation Serif;font-size:22.2px;font-style:italic;" fill="#111">b</text>
<text transform="translate(296.1 530.4) scale(0.83 1)" style="font-family:Liberation Serif;font-size:14.5px;" fill="#111">eff,2</text>
</svg>
</body></html>
